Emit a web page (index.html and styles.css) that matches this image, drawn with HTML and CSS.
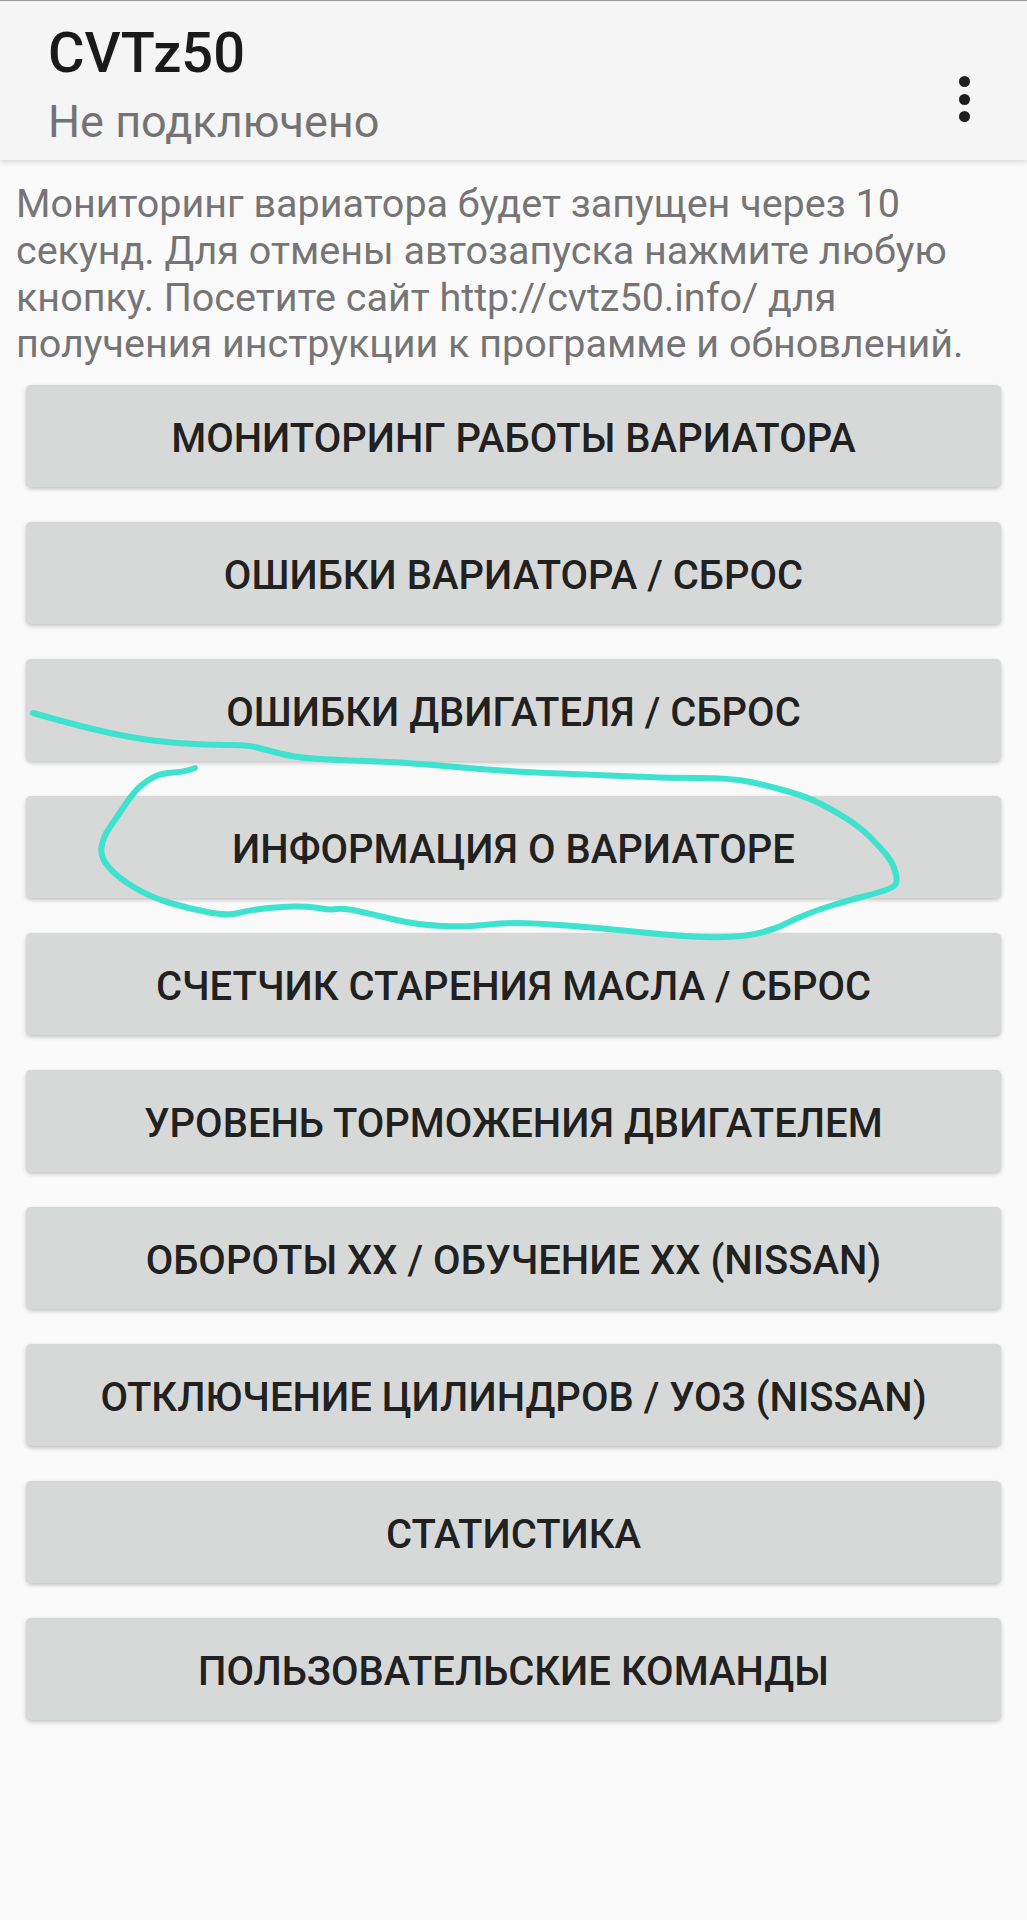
FILE: index.html
```html
<!DOCTYPE html>
<html lang="ru">
<head>
<meta charset="utf-8">
<title>CVTz50</title>
<link rel="stylesheet" href="styles.css">
</head>
<body>
<div class="page">
  <header class="appbar">
    <div class="titles">
      <div class="title">CVTz50</div>
      <div class="subtitle">Не подключено</div>
    </div>
    <div class="overflow" aria-label="menu">
      <span class="dot"></span><span class="dot"></span><span class="dot"></span>
    </div>
  </header>

  <p class="info">Мониторинг вариатора будет запущен через 10 секунд. Для отмены автозапуска нажмите любую кнопку. Посетите сайт http://cvtz50.info/ для получения инструкции к программе и обновлений.</p>

  <div class="buttons">
    <div class="btn">МОНИТОРИНГ РАБОТЫ ВАРИАТОРА</div>
    <div class="btn">ОШИБКИ ВАРИАТОРА / СБРОС</div>
    <div class="btn">ОШИБКИ ДВИГАТЕЛЯ / СБРОС</div>
    <div class="btn">ИНФОРМАЦИЯ О ВАРИАТОРЕ</div>
    <div class="btn">СЧЕТЧИК СТАРЕНИЯ МАСЛА / СБРОС</div>
    <div class="btn">УРОВЕНЬ ТОРМОЖЕНИЯ ДВИГАТЕЛЕМ</div>
    <div class="btn">ОБОРОТЫ ХХ / ОБУЧЕНИЕ ХХ (NISSAN)</div>
    <div class="btn">ОТКЛЮЧЕНИЕ ЦИЛИНДРОВ / УОЗ (NISSAN)</div>
    <div class="btn">СТАТИСТИКА</div>
    <div class="btn">ПОЛЬЗОВАТЕЛЬСКИЕ КОМАНДЫ</div>
  </div>

  <svg class="scribble" width="1027" height="1920" viewBox="0 0 1027 1920" aria-hidden="true">
    <path d="M33,713 L58,720 Q83,727 108,732.5 Q133,738 153,740.5 Q173,743 195,744 Q217,745 232,745 Q247,745 257,747.5 Q267,750 280,753.5 Q293,757 313,758.5 Q333,760 366.5,761 Q400,762 433.5,765 Q467,768 493.5,770 Q520,772 560,773.5 Q600,775 633.5,776.5 Q667,778 700,778 Q733,778 753,782.5 Q773,787 790,792 Q807,797 820,803.5 Q833,810 846.5,818.5 Q860,827 870,837 Q880,847 886.5,855 Q893,863 895.5,872.5 Q898,882 895,885 Q892,888 884.5,890.5 Q877,893 863.5,896.5 Q850,900 833.5,905 Q817,910 805,915 Q793,920 785,924 Q777,928 765,931.5 Q753,935 735,936.5 Q717,938 692,936.5 Q667,935 633.5,931.5 Q600,928 566.5,925.5 Q533,923 516.5,923 Q500,923 483.5,925 Q467,927 442,926 Q417,925 392,919 Q367,913 355,910.5 Q343,908 336.5,909 Q330,910 321.5,908.5 Q313,907 300,906.5 Q287,906 268.5,908 Q250,910 238.5,913 Q227,916 207,912 Q187,908 168.5,902.5 Q150,897 133.5,887 Q117,877 108.5,867 Q100,857 101.5,847 Q103,837 110,827 Q117,817 125,805 Q133,793 140,786.5 Q147,780 155,776.5 Q163,773 173,772.5 Q183,772 189,770 L195,768"/>
  </svg>
</div>
</body>
</html>
```

FILE: styles.css
```css
html, body {
  margin: 0;
  padding: 0;
  background: #fafafa;
}

.page {
  position: relative;
  width: 1027px;
  min-height: 1920px;
  font-family: Roboto, "Noto Sans", "Liberation Sans", sans-serif;
}

.appbar {
  height: 160px;
  box-sizing: border-box;
  border-top: 1px solid #9a9a9a;
  background: #f5f5f5;
  box-shadow: 0 2px 5px rgba(0, 0, 0, 0.14);
  display: flex;
  justify-content: space-between;
  align-items: flex-start;
  padding: 24px 0 0 48px;
  position: relative;
}

.titles {
  display: flex;
  flex-direction: column;
}

.title {
  font-size: 56px;
  line-height: 56px;
  font-weight: 500;
  color: #1a1a1a;
}

.subtitle {
  margin-top: 18px;
  font-size: 45px;
  line-height: 45px;
  color: #737373;
}

.overflow {
  width: 60px;
  margin-top: 51px;
  margin-right: 33px;
  display: flex;
  flex-direction: column;
  align-items: center;
  gap: 6.5px;
}

.dot {
  width: 11px;
  height: 11px;
  border-radius: 50%;
  background: #1e1e1e;
}

.info {
  margin: 21px 0 0 0;
  padding: 0 16px;
  font-size: 39.5px;
  line-height: 46.8px;
  color: #757575;
}

.buttons {
  margin: 17px 26px 0 26px;
  display: flex;
  flex-direction: column;
  gap: 35px;
}

.btn {
  height: 102px;
  box-sizing: border-box;
  padding-top: 4px;
  background: #d7d8d8;
  border-radius: 5px;
  box-shadow: 0 2px 4px rgba(0, 0, 0, 0.22), 0 0 1px rgba(0, 0, 0, 0.08);
  display: flex;
  align-items: center;
  justify-content: center;
  font-size: 40px;
  font-weight: 500;
  color: rgba(0, 0, 0, 0.87);
  white-space: nowrap;
}

.scribble {
  position: absolute;
  left: 0;
  top: 0;
  pointer-events: none;
  fill: none;
  stroke: #3fe2cf;
  stroke-width: 6;
  stroke-linecap: round;
  stroke-linejoin: round;
}
```
